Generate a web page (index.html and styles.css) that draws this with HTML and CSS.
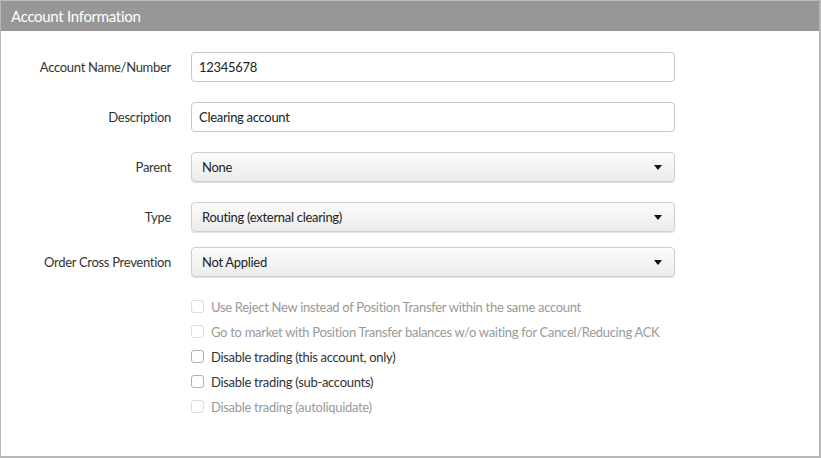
FILE: index.html
```html
<!DOCTYPE html>
<html lang="en">
<head>
    <meta charset="UTF-8">
    <meta name="viewport" content="width=device-width, initial-scale=1.0">
    <title>Account Information</title>
    <link rel="stylesheet" href="styles.css">
</head>
<body>
    <div class="panel">
        <div class="panel-header">Account Information</div>

        <form class="account-form">
            <div class="field">
                <label for="acct-name">Account Name/Number</label>
                <input type="text" id="acct-name" value="12345678">
            </div>

            <div class="field">
                <label for="acct-desc">Description</label>
                <input type="text" id="acct-desc" value="Clearing account">
            </div>

            <div class="field">
                <label for="acct-parent">Parent</label>
                <div class="select-wrap">
                    <select id="acct-parent">
                        <option>None</option>
                    </select>
                    <span class="caret"></span>
                </div>
            </div>

            <div class="field">
                <label for="acct-type">Type</label>
                <div class="select-wrap">
                    <select id="acct-type">
                        <option>Routing (external clearing)</option>
                    </select>
                    <span class="caret"></span>
                </div>
            </div>

            <div class="field field-tight">
                <label for="acct-ocp">Order Cross Prevention</label>
                <div class="select-wrap">
                    <select id="acct-ocp">
                        <option>Not Applied</option>
                    </select>
                    <span class="caret"></span>
                </div>
            </div>

            <div class="options">
                <label class="check disabled"><input type="checkbox" disabled><span class="box"></span>Use Reject New instead of Position Transfer within the same account</label>
                <label class="check disabled"><input type="checkbox" disabled><span class="box"></span>Go to market with Position Transfer balances w/o waiting for Cancel/Reducing ACK</label>
                <label class="check"><input type="checkbox"><span class="box"></span>Disable trading (this account, only)</label>
                <label class="check"><input type="checkbox"><span class="box"></span>Disable trading (sub-accounts)</label>
                <label class="check disabled"><input type="checkbox" disabled><span class="box"></span>Disable trading (autoliquidate)</label>
            </div>
        </form>
    </div>
</body>
</html>
```

FILE: styles.css
```css
* {
    box-sizing: border-box;
}

body {
    margin: 0;
    font-family: 'Lato', 'Noto Sans', sans-serif;
    font-size: 13px;
    letter-spacing: -0.3px;
    color: #333;
    background: #fff;
}

.panel {
    height: 458px;
    border: 1px solid #b8b8b8;
    border-top: none;
    border-right-width: 2px;
    border-bottom-width: 2px;
}

.panel-header {
    height: 31px;
    border-top: 1px solid #bbb;
    background: #979797;
    color: #fff;
    font-size: 15px;
    line-height: 30px;
    padding-left: 10px;
}

.account-form {
    padding-top: 21px;
}

.field {
    display: grid;
    grid-template-columns: 170px 484px;
    column-gap: 20px;
    align-items: center;
    margin-bottom: 20px;
}

.field-tight {
    margin-top: -5px;
}

.field label {
    text-align: right;
    color: #333;
}

.field input[type="text"] {
    height: 30px;
    border: 1px solid #c8c8c8;
    border-radius: 4px;
    padding: 0 7px;
    font: inherit;
    letter-spacing: inherit;
    color: #222;
    outline: none;
}

.select-wrap {
    position: relative;
}

.select-wrap select {
    appearance: none;
    -webkit-appearance: none;
    width: 100%;
    height: 30px;
    border: 1px solid #cfcfcf;
    border-radius: 4px;
    padding: 0 10px;
    font: inherit;
    letter-spacing: inherit;
    color: #222;
    background: linear-gradient(#fbfbfb, #ececec);
    box-shadow: 0 1px 1px rgba(0, 0, 0, 0.12);
}

/* little down arrow over the select */
.caret {
    position: absolute;
    right: 13px;
    top: 13px;
    border-left: 4px solid transparent;
    border-right: 4px solid transparent;
    border-top: 5px solid #111;
    pointer-events: none;
}

.options {
    margin-top: -3px;
    padding-left: 190px;
}

.check {
    display: flex;
    align-items: center;
    height: 25px;
    color: #333;
}

.check input {
    display: none;
}

.check .box {
    width: 13px;
    height: 13px;
    border: 1px solid #b0b0b0;
    border-radius: 3px;
    margin-right: 7px;
    background: #fff;
}

.check.disabled {
    color: #999;
}

.check.disabled .box {
    border-color: #dcdcdc;
}
```
